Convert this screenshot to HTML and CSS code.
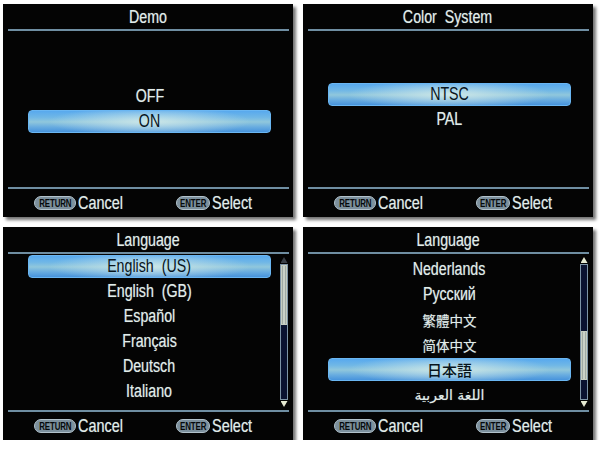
FILE: index.html
```html
<!DOCTYPE html>
<html lang="en">
<head>
<meta charset="utf-8">
<title>Menus</title>
<link rel="stylesheet" href="styles.css">
</head>
<body>
<div class="screen">
  <section class="panel">
    <div class="title"><span class="t">Demo</span></div>
    <div class="rule"></div>
    <div class="list list--center">
      <div class="item"><span class="t">OFF</span></div>
      <div class="item item--sel"><span class="t">ON</span></div>
    </div>
    <div class="rule"></div>
    <div class="footer">
      <div class="key"><span class="pill pill--return"><span class="pt">RETURN</span></span><span class="t">Cancel</span></div>
      <div class="key"><span class="pill pill--enter"><span class="pt">ENTER</span></span><span class="t">Select</span></div>
    </div>
  </section>

  <section class="panel">
    <div class="title"><span class="t">Color  System</span></div>
    <div class="rule"></div>
    <div class="list list--center list--up">
      <div class="item item--sel"><span class="t">NTSC</span></div>
      <div class="item"><span class="t">PAL</span></div>
    </div>
    <div class="rule"></div>
    <div class="footer">
      <div class="key"><span class="pill pill--return"><span class="pt">RETURN</span></span><span class="t">Cancel</span></div>
      <div class="key"><span class="pill pill--enter"><span class="pt">ENTER</span></span><span class="t">Select</span></div>
    </div>
  </section>

  <section class="panel">
    <div class="title"><span class="t">Language</span></div>
    <div class="rule"></div>
    <div class="list">
      <div class="item item--sel"><span class="t">English  (US)</span></div>
      <div class="item"><span class="t">English  (GB)</span></div>
      <div class="item"><span class="t">Español</span></div>
      <div class="item"><span class="t">Français</span></div>
      <div class="item"><span class="t">Deutsch</span></div>
      <div class="item"><span class="t">Italiano</span></div>
      <div class="scroll">
        <div class="arrow arrow--up arrow--dim"></div>
        <div class="track"><div class="thumb" style="top:0;height:45%"></div></div>
        <div class="arrow arrow--down"></div>
      </div>
    </div>
    <div class="rule"></div>
    <div class="footer">
      <div class="key"><span class="pill pill--return"><span class="pt">RETURN</span></span><span class="t">Cancel</span></div>
      <div class="key"><span class="pill pill--enter"><span class="pt">ENTER</span></span><span class="t">Select</span></div>
    </div>
  </section>

  <section class="panel">
    <div class="title"><span class="t">Language</span></div>
    <div class="rule"></div>
    <div class="list list--down">
      <div class="item"><span class="t">Nederlands</span></div>
      <div class="item"><span class="t">Русский</span></div>
      <div class="item"><span class="cjk" lang="zh-Hant">繁體中文</span></div>
      <div class="item"><span class="cjk" lang="zh-Hans">简体中文</span></div>
      <div class="item item--sel"><span class="cjk cjk--jp" lang="ja">日本語</span></div>
      <div class="item"><span class="ar" lang="ar" dir="rtl">اللغة العربية</span></div>
      <div class="scroll">
        <div class="arrow arrow--up"></div>
        <div class="track"><div class="thumb" style="top:49%;height:37%"></div></div>
        <div class="arrow arrow--down"></div>
      </div>
    </div>
    <div class="rule"></div>
    <div class="footer">
      <div class="key"><span class="pill pill--return"><span class="pt">RETURN</span></span><span class="t">Cancel</span></div>
      <div class="key"><span class="pill pill--enter"><span class="pt">ENTER</span></span><span class="t">Select</span></div>
    </div>
  </section>
</div>
</body>
</html>
```

FILE: styles.css
```css
* { box-sizing: border-box; }

body {
  margin: 0;
  background: #ffffff;
  font-family: "Liberation Sans", Arial, sans-serif;
}

.screen {
  display: grid;
  grid-template-columns: 290px 290px;
  grid-template-rows: 213px 213px;
  gap: 10px;
  padding: 4px 0 0 3px;
}

.panel {
  background: #040404;
  color: #e2ecea;
  display: flex;
  flex-direction: column;
  box-shadow: 3px 3px 3px rgba(70, 70, 70, 0.75);
  overflow: hidden;
  text-shadow: 0 0 1px rgba(190, 225, 225, 0.55);
}

.title {
  height: 25px;
  flex: none;
  display: flex;
  align-items: center;
  justify-content: center;
  font-size: 18px;
  padding-top: 1px;
}

.rule {
  height: 2px;
  flex: none;
  background: #6f8ea2;
  margin: 0 4px 0 5px;
}

.list {
  flex: 1;
  position: relative;
  display: flex;
  flex-direction: column;
  padding: 0 22px 0 25px;
}

.list--center { justify-content: center; }
.list--up { padding-bottom: 4px; }
.list--down { padding-top: 3px; }

.item {
  flex: none;
  height: 23px;
  margin: 1px 0;
  display: flex;
  align-items: center;
  justify-content: center;
  font-size: 18px;
  border-radius: 4px;
}

.item--sel {
  color: #08141c;
  text-shadow: none;
  border: 1px solid #6ab6f2;
  background:
    radial-gradient(ellipse 42% 70% at 50% 50%, rgba(214, 236, 234, 0.85), rgba(214, 236, 234, 0) 100%),
    linear-gradient(180deg, #58a9ee 0%, #70b7e6 30%, #90c7dc 52%, #68ace0 76%, #4793dc 100%);
}

.t {
  display: inline-block;
  transform: scaleX(0.79);
  white-space: pre;
}

.cjk {
  font-family: "Noto Sans CJK TC", "Noto Sans CJK SC", sans-serif;
  font-size: 13.5px;
}

.cjk--jp {
  font-family: "Noto Sans CJK JP", sans-serif;
  font-size: 15px;
  font-weight: 500;
}

.ar {
  font-family: "DejaVu Sans", sans-serif;
  font-size: 14px;
}

.footer {
  height: 28px;
  flex: none;
  display: grid;
  grid-template-columns: 142px auto;
  align-items: center;
  padding-left: 31px;
  font-size: 19px;
}

.key {
  display: flex;
  align-items: center;
  gap: 2px;
}

.key .t {
  transform: scaleX(0.76);
  transform-origin: left center;
}

.pill {
  height: 14px;
  border-radius: 7px;
  background: #7c909d;
  border: 1px solid #b2c2cb;
  color: #05090b;
  text-shadow: none;
  display: flex;
  align-items: center;
  justify-content: center;
  flex: none;
  overflow: hidden;
}

.pt {
  display: inline-block;
  font-size: 11px;
  font-weight: bold;
  letter-spacing: -0.2px;
  transform: scaleX(0.72);
}

.pill--return { width: 42px; }
.pill--enter { width: 34px; }

.scroll {
  position: absolute;
  right: 5px;
  top: 3px;
  bottom: 3px;
  width: 8px;
  display: flex;
  flex-direction: column;
  align-items: center;
}

.track {
  flex: 1;
  width: 8px;
  position: relative;
  border: 1px solid #7d94a6;
  background: #0a1230;
}

.thumb {
  position: absolute;
  left: 0;
  right: 0;
  border: 1px solid #c6cec0;
  background: linear-gradient(90deg, #8b9793, #dfe5d8 50%, #8b9793);
}

.arrow {
  flex: none;
  width: 7px;
  height: 6px;
  background: #e6ead2;
}

.arrow--up {
  clip-path: polygon(50% 0, 100% 100%, 0 100%);
  margin-bottom: 1px;
}

.arrow--down {
  clip-path: polygon(0 0, 100% 0, 50% 100%);
  margin-top: 1px;
}

.arrow--dim { background: #3a4048; }
```
